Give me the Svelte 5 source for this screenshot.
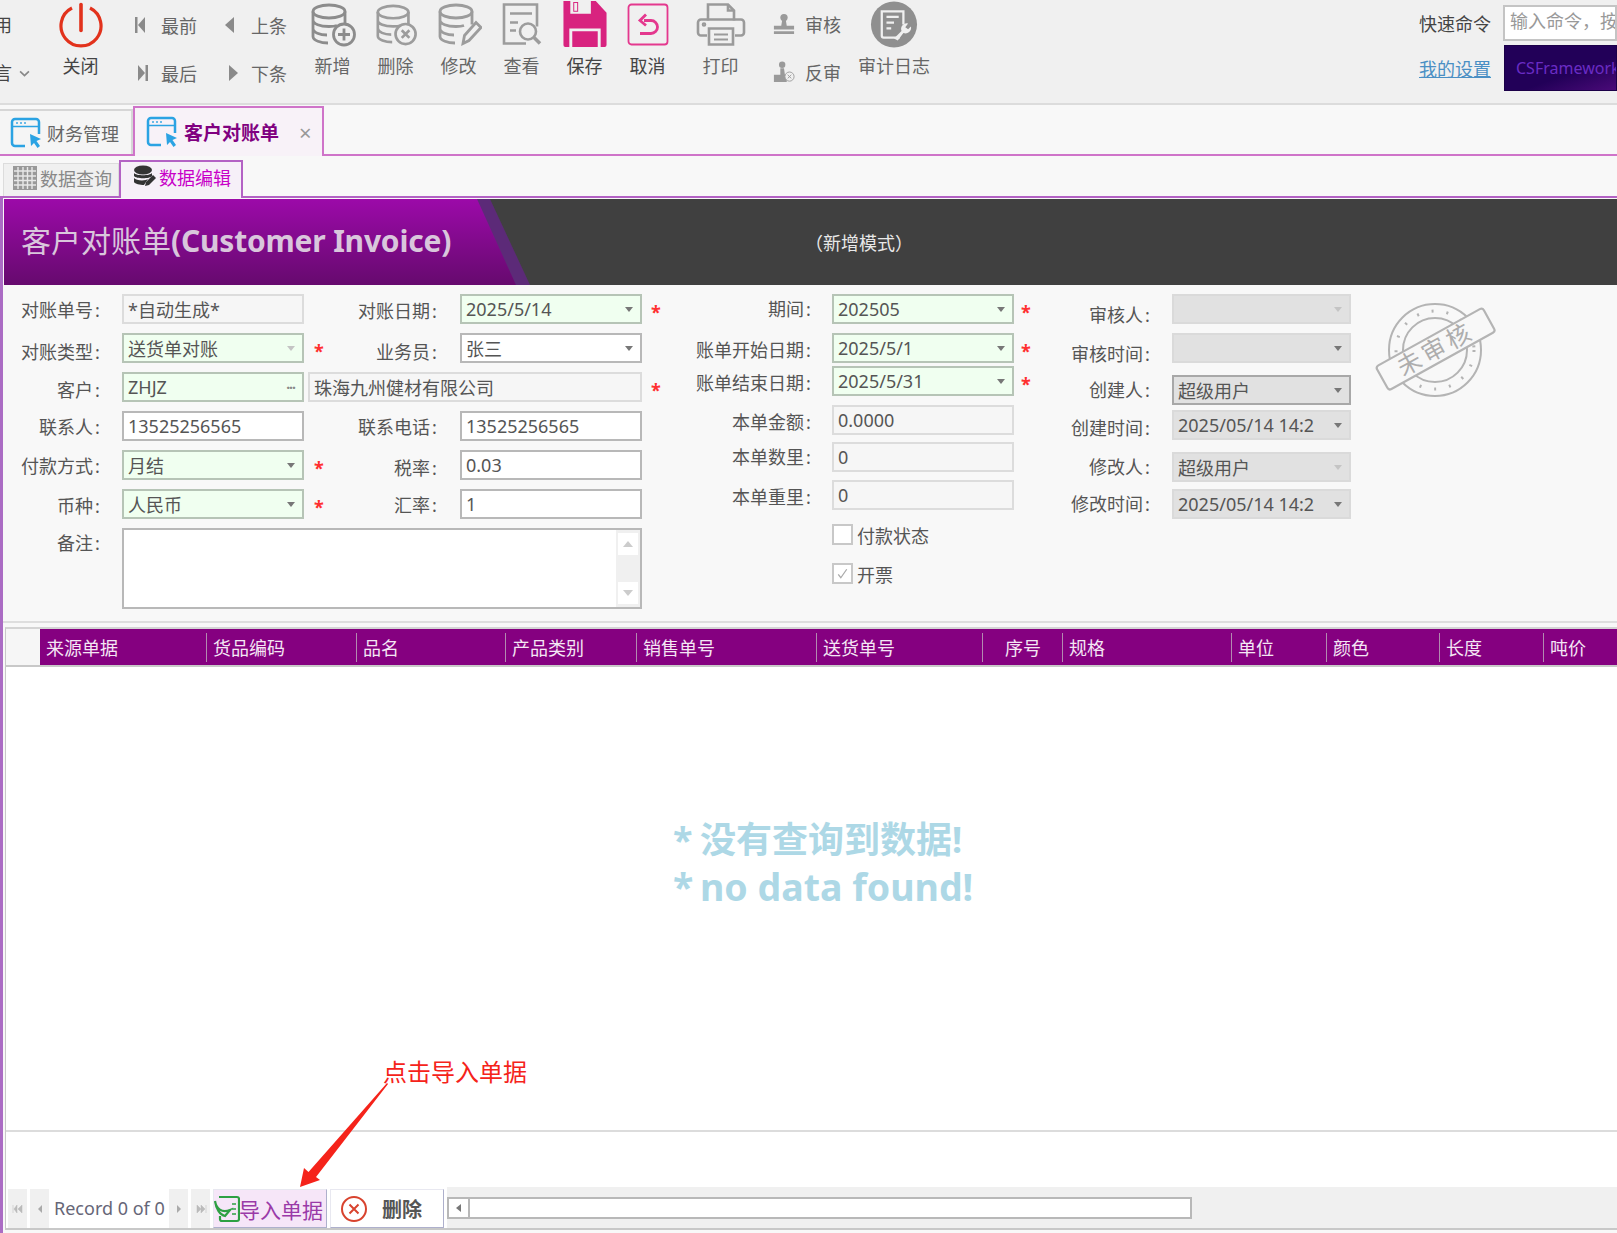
<script>
	const left = [
		{ l1: '对账单号', f1: { v: '*自动生成*', t: 'ro' }, l2: '对账日期', f2: { v: '2025/5/14', t: 'req', arrow: 1 }, star2: 1, d1: 1, d2: 2, mt: 0 },
		{ l1: '对账类型', f1: { v: '送货单对账', t: 'req', arrow: 2 }, star1: 1, l2: '业务员', f2: { v: '张三', t: 'plain', arrow: 1 }, d1: 4, d2: 4, mt: 9 },
		{ l1: '客户', f1: { v: 'ZHJZ', t: 'req', dots: 1 }, name: '珠海九州健材有限公司', star2: 1, d1: 3, mt: 9 },
		{ l1: '联系人', f1: { v: '13525256565', t: 'plain' }, l2: '联系电话', f2: { v: '13525256565', t: 'plain' }, d1: 1, d2: 1, mt: 9 },
		{ l1: '付款方式', f1: { v: '月结', t: 'req', arrow: 1 }, star1: 1, l2: '税率', f2: { v: '0.03', t: 'plain' }, d1: 1, d2: 3, mt: 9 },
		{ l1: '币种', f1: { v: '人民币', t: 'req', arrow: 1 }, star1: 1, l2: '汇率', f2: { v: '1', t: 'plain' }, d1: 2, d2: 1, mt: 9 }
	];
	const col3 = [
		{ l: '期间', v: '202505', t: 'req', arrow: 1, star: 1, d: 0, mt: 0 },
		{ l: '账单开始日期', v: '2025/5/1', t: 'req', arrow: 1, star: 1, d: 2, mt: 9 },
		{ l: '账单结束日期', v: '2025/5/31', t: 'req', arrow: 1, star: 1, d: 2, mt: 3 },
		{ l: '本单金额', v: '0.0000', t: 'ro', d: 2, mt: 9 },
		{ l: '本单数里', v: '0', t: 'ro', d: 0, mt: 7 },
		{ l: '本单重里', v: '0', t: 'ro', d: 2, mt: 8 }
	];
	const col4 = [
		{ l: '审核人', v: '', t: 'off', arrow: 2, d: 6, mt: 0 },
		{ l: '审核时间', v: '', t: 'off', arrow: 1, d: 6, mt: 9 },
		{ l: '创建人', v: '超级用户', t: 'off dark', arrow: 1, d: 0, mt: 12 },
		{ l: '创建时间', v: '2025/05/14 14:2', t: 'off', arrow: 1, d: 3, mt: 5 },
		{ l: '修改人', v: '超级用户', t: 'off', arrow: 2, d: 0, mt: 12 },
		{ l: '修改时间', v: '2025/05/14 14:2', t: 'off', arrow: 1, d: 0, mt: 7 }
	];
	const columns = [
		{ name: '来源单据', w: 167 }, { name: '货品编码', w: 150 }, { name: '品名', w: 149 },
		{ name: '产品类别', w: 131 }, { name: '销售单号', w: 180 }, { name: '送货单号', w: 166 },
		{ name: '序号', w: 80, center: true }, { name: '规格', w: 169 }, { name: '单位', w: 95 },
		{ name: '颜色', w: 113 }, { name: '长度', w: 104 }, { name: '吨价', w: 73 }
	];
</script>

{#snippet field(f)}
	<div class="field {f.t}">
		<span class="val">{f.v}</span>
		{#if f.arrow}<i class="arrow" class:faint={f.arrow === 2}></i>{/if}
		{#if f.dots}<span class="dots">···</span>{/if}
	</div>
{/snippet}

{#snippet db()}
	<ellipse cx="20" cy="10" rx="16" ry="6.5" />
	<path d="M4 10v25c0 4 8 6.5 15 6.5M36 10v13M4 18.500c0 4 7 6.500 16 6.500 3 0 6-.3 8-1M4 27c0 4 7 6.500 14 6.500" />
{/snippet}

{#snippet winIcon()}
	<svg class="win" viewBox="0 0 32 32">
		<path d="M15 29H5a3 3 0 0 1-3-3V5a3 3 0 0 1 3-3h21a3 3 0 0 1 3 3v12" fill="none" stroke="#2ba3e3" stroke-width="2.500" />
		<path d="M3 9.500h25" stroke="#2ba3e3" stroke-width="1.500" />
		<path d="M6 6h2M10 6h2M14 6h2" stroke="#6bbbe8" stroke-width="2" />
		<path d="M20 17l11 5-4.500 2 3.500 5-2.500 2-3.500-5-3 3z" fill="#2ba3e3" />
	</svg>
{/snippet}

<div class="page">
	<header class="toolbar">
		<div class="lang">
			<span class="cut">用</span>
			<span class="cut">言<svg class="chev" viewBox="0 0 10 6"><path d="M1 1l4 4 4-4" fill="none" stroke="#888" stroke-width="1.500" /></svg></span>
		</div>
		<div class="big dark-label">
			<svg width="46" height="46" viewBox="0 0 46 46" fill="none" stroke="#e2321c" stroke-width="3.200"><path d="M14 6.500a20 20 0 1 0 18 0" /><path d="M23 3v26" stroke-linecap="round" stroke-width="3.600" /></svg>
			<span>关闭</span>
		</div>
		<div class="nav-group">
			<div class="nav"><svg viewBox="0 0 12 20"><path d="M1 2h2.500v16H1zM11 2v16L4 10z" fill="#8a8a8a" /></svg><span>最前</span></div>
			<div class="nav"><svg viewBox="0 0 12 20"><path d="M10 2v16L1 10z" fill="#8a8a8a" /></svg><span>上条</span></div>
			<div class="nav low"><svg viewBox="0 0 12 20"><path d="M1 2v16l7-8zM8.500 2H11v16H8.500z" fill="#8a8a8a" /></svg><span>最后</span></div>
			<div class="nav low"><svg viewBox="0 0 12 20"><path d="M2 2v16l9-8z" fill="#8a8a8a" /></svg><span>下条</span></div>
		</div>
		<div class="big">
			<svg width="48" height="46" viewBox="0 0 48 46" fill="none" stroke="#8c8c8c" stroke-width="2.800">{@render db()}<circle cx="35" cy="33" r="10.500" /><path d="M35 27v12M29 33h12" /></svg>
			<span>新增</span>
		</div>
		<div class="big">
			<svg width="44" height="46" viewBox="0 0 46 46" fill="none" stroke="#9c9c9c" stroke-width="2.800">{@render db()}<circle cx="33" cy="33" r="10.500" /><path d="M29 29l8 8M37 29l-8 8" /></svg>
			<span>删除</span>
		</div>
		<div class="big">
			<svg width="46" height="46" viewBox="0 0 46 46" fill="none" stroke="#9c9c9c" stroke-width="2.800">{@render db()}<path d="M27 42l1.500-8L40 21l5 5-12 13z" /></svg>
			<span>修改</span>
		</div>
		<div class="big">
			<svg width="40" height="46" viewBox="0 0 40 46" fill="none" stroke="#9c9c9c" stroke-width="2.600"><path d="M24 42H2V3h33v22" /><path d="M8 12h22M8 21h8M8 29h6" /><circle cx="26" cy="30" r="8" /><path d="M32 36l6 6" stroke-width="3.500" /></svg>
			<span>查看</span>
		</div>
		<div class="big dark-label">
			<svg width="46" height="48" viewBox="0 0 46 48"><path d="M1 0h33l11 12v33a2 2 0 0 1-2 2H3a2 2 0 0 1-2-2z" fill="#d8237f" /><path d="M8 0h21v13H8zM7 28h32v19H7z" fill="#f0f0f0" /><path d="M11 1h5v10h-5zM10 31h26v16H10z" fill="#d8237f" /><path d="M12 2h3v8h-3z" fill="#f0f0f0" /></svg>
			<span>保存</span>
		</div>
		<div class="big dark-label">
			<svg width="42" height="44" viewBox="0 0 42 44" fill="none" stroke="#e4388e"><rect x="1.500" y="2" width="39" height="40" rx="3" stroke-width="1.800" /><path d="M13 31h11a6.500 6.500 0 0 0 0-13h-7" stroke-width="2.800" /><path d="M19 12l-6 6 6 5" stroke-width="2.800" /></svg>
			<span>取消</span>
		</div>
		<div class="big print">
			<svg width="50" height="44" viewBox="0 0 50 44" fill="none" stroke="#9a9a9a" stroke-width="2.600"><path d="M12 18V2h20l6 6v10" /><path d="M32 2v6h6" /><path d="M11 33H5a3 3 0 0 1-3-3V20a3 3 0 0 1 3-3h40a3 3 0 0 1 3 3v10a3 3 0 0 1-3 3h-6" /><path d="M13 26h24v16H13z" /><path d="M18 32h14M18 37h14" stroke-width="2" /><circle cx="8" cy="22" r="1" /></svg>
			<span>打印</span>
		</div>
		<div class="audit-col">
			<div class="nav"><svg class="small" viewBox="0 0 24 24"><circle cx="12" cy="5" r="4" fill="#9a9a9a" /><path d="M10 8h4l1 6h8v4H1v-4h8zM1 20h22v3H1z" fill="#9a9a9a" /></svg><span>审核</span></div>
			<div class="nav low"><svg class="small" viewBox="0 0 24 24"><circle cx="10" cy="4" r="3.500" fill="#9a9a9a" /><path d="M8 8h4l1 7H1v8h14V15H8z" fill="#9a9a9a" /><circle cx="18" cy="17" r="5" fill="#f0f0f0" stroke="#9a9a9a" /><path d="M16 15l4 4M20 15l-4 4" stroke="#9a9a9a" /></svg><span>反审</span></div>
		</div>
		<div class="big audit">
			<svg width="50" height="50" viewBox="0 0 50 50"><circle cx="25" cy="25" r="24.500" fill="#8f8f8f" /><path d="M31 39H14a2 2 0 0 1-2-2V11h23v14" fill="none" stroke="#f0f0f0" stroke-width="2.400" /><path d="M17 17h13M17 23h8M17 29h5" stroke="#f0f0f0" stroke-width="2.400" /><path d="M25 40l8-8a6 6 0 0 1 7-8l-3 4 3 2 3-3a6 6 0 0 1-8 7l-6 8z" fill="#f0f0f0" /></svg>
			<span>审计日志</span>
		</div>
		<div class="quick">
			<span class="q-label">快速命令</span>
			<div class="q-input">输入命令，按回车执行</div>
			<span class="q-link">我的设置</span>
			<div class="brand">CSFramework</div>
		</div>
	</header>

	<nav class="tabs">
		<div class="tab">{@render winIcon()}<span>财务管理</span></div>
		<div class="tab active">{@render winIcon()}<b>客户对账单</b><span class="close">×</span></div>
	</nav>

	<nav class="subtabs">
		<div class="subtab">
			<svg width="24" height="24" viewBox="0 0 24 24"><rect width="24" height="24" fill="#999" /><path d="M1 5h22M1 10h22M1 14.500h22M1 19h22M5 1v22M10 1v22M14.500 1v22M19 1v22" stroke="#e8e8e8" stroke-width="1.400" /></svg>
			<span>数据查询</span>
		</div>
		<div class="subtab active">
			<svg width="24" height="24" viewBox="0 0 24 24"><ellipse cx="11" cy="5" rx="9" ry="4.500" fill="#333" /><path d="M2 8c2 3 16 3 18 0v3c-2 3-16 3-18 0zM2 13c2 3 12 3 14 1l-4 6c-4 0-9-1-10-3z" fill="#333" /><path d="M13 21l1-4 7-7 3 3-7 7z" fill="#333" /></svg>
			<span>数据编辑</span>
		</div>
	</nav>

	<main class="content">
		<div class="banner">
			<div class="stripe">
				<div class="purple">
					<h1><span class="cn">客户对账单</span>(Customer Invoice)</h1>
				</div>
			</div>
			<span class="mode">（新增模式）</span>
		</div>

		<section class="form">
			<div class="left-block">
				{#each left as r}
					<div class="lrow" style="margin-top:{r.mt}px">
						<div class="lab" style="padding-top:{r.d1}px">{r.l1}</div>
						{@render field(r.f1)}
						{#if r.name}
							<div class="field ro name"><span class="val">{r.name}</span></div>
						{:else}
							<div class="mid">
								{#if r.star1}<span class="star">*</span>{/if}
								<div class="lab" style="padding-top:{r.d2}px">{r.l2}</div>
							</div>
							{@render field(r.f2)}
						{/if}
						{#if r.star2}<span class="star end">*</span>{/if}
					</div>
				{/each}
				<div class="lrow memo-row">
					<div class="lab">备注</div>
					<div class="memo">
						<div class="memo-bar">
							<span class="sb"><i class="up"></i></span>
							<span class="sb"><i class="down"></i></span>
						</div>
					</div>
				</div>
			</div>

			<div class="col col3">
				{#each col3 as f}
					<div class="crow" style="margin-top:{f.mt}px">
						<div class="lab" style="padding-top:{f.d}px">{f.l}</div>
						{@render field(f)}
						{#if f.star}<span class="star">*</span>{/if}
					</div>
				{/each}
				<div class="check"><span class="box"></span>付款状态</div>
				<div class="check second">
					<span class="box"><svg viewBox="0 0 20 20"><path d="M5 11l3 4 7-10" fill="none" stroke="#aaa" stroke-width="1.500" /></svg></span>开票
				</div>
			</div>

			<div class="col col4">
				{#each col4 as f}
					<div class="crow" style="margin-top:{f.mt}px">
						<div class="lab" style="padding-top:{f.d}px">{f.l}</div>
						{@render field(f)}
					</div>
				{/each}
			</div>

			<svg class="stamp" width="124" height="100" viewBox="0 0 124 100" fill="none" stroke="#b4b4b4">
				<circle cx="60" cy="50" r="46" stroke-width="2" />
				<circle cx="60" cy="50" r="32" stroke-width="2" />
				<circle cx="60" cy="50" r="39" stroke-width="3" stroke-dasharray="2 13" />
				<g transform="rotate(-29 60 50)">
					<rect x="0" y="36" width="122" height="27" rx="3" fill="#f8f8f8" stroke-width="2.200" />
					<text x="61" y="58" text-anchor="middle" class="stamp-text">未审核</text>
				</g>
			</svg>
		</section>

		<section class="grid">
			<div class="grid-head">
				<div class="corner"></div>
				{#each columns as c}
					<div class="th" class:center={c.center} style="width:{c.w}px">{c.name}</div>
				{/each}
			</div>
			<div class="empty">
				<div class="msg"><span class="ast">*</span>没有查询到数据!</div>
				<div class="msg en"><span class="ast">*</span>no data found!</div>
			</div>
			<div class="summary"></div>
			<div class="pager">
				<span class="pg"><svg viewBox="0 0 12 8"><path d="M1 0v8M5 0v8L2 4zM10 0v8L6 4z" fill="#bbb" stroke="#bbb" stroke-width=".5" /></svg></span>
				<span class="pg"><svg viewBox="0 0 12 8"><path d="M8 0v8L4 4z" fill="#aaa" /></svg></span>
				<span class="record">Record 0 of 0</span>
				<span class="pg"><svg viewBox="0 0 12 8"><path d="M4 0v8l4-4z" fill="#aaa" /></svg></span>
				<span class="pg"><svg viewBox="0 0 12 8"><path d="M2 0v8l4-4zM6 0v8l4-4zM11 0v8" fill="#bbb" stroke="#bbb" stroke-width=".5" /></svg></span>
				<div class="btn import">
					<svg width="26" height="28" viewBox="0 0 26 28" fill="none" stroke="#2ea043" stroke-width="2.200"><path d="M5 2h18a2 2 0 0 1 2 2v20a2 2 0 0 1-2 2H8a2 2 0 0 1-2-2v-3" /><path d="M18 9h4M18 14h4M18 19h4" stroke-width="1.600" /><path d="M1 6c1 8 7 12 15 9l-5 6C6 20 2 14 1 6z" fill="#f6e6f8" /></svg>
					<span>导入单据</span>
				</div>
				<div class="btn del">
					<svg width="28" height="28" viewBox="0 0 28 28" fill="none" stroke="#d8432e" stroke-width="2"><circle cx="14" cy="14" r="12" /><path d="M9.500 9.500l9 9M18.500 9.500l-9 9" /></svg>
					<span>删除</span>
				</div>
				<div class="hscroll">
					<span class="hs-btn"><i></i></span>
					<div class="hs-thumb"></div>
				</div>
			</div>
		</section>
	</main>

	<div class="note">点击导入单据</div>
	<svg class="note-arrow" width="1617" height="1233" viewBox="0 0 1617 1233">
		<path d="M387 1083L388 1084L316 1177L320 1180L300 1187L304 1168L308.500 1172Z" fill="#f5231a" />
	</svg>
</div>

<style>
	:global(body) {
		margin: 0;
		background: #f8f8f8;
	}

	.page {
		position: relative;
		width: 1617px;
		height: 1233px;
		overflow: hidden;
		display: flex;
		flex-direction: column;
		font-family: "Noto Sans", "Noto Sans CJK SC", sans-serif;
		font-size: 18px;
		color: #666;
		background: #f8f8f8;
	}

	/* toolbar */
	.toolbar {
		display: flex;
		height: 103px;
		flex: none;
		background: #f0f0f0;
		border-bottom: 2px solid #dcdcdc;
	}

	.lang {
		width: 49px;
		display: flex;
		flex-direction: column;
		color: #444;
		line-height: 26px;
		margin-left: -6px;
		margin-right: 6px;
		padding-top: 12px;
		gap: 22px;
	}

	.cut {
		display: flex;
		align-items: center;
	}

	.chev {
		width: 11px;
		height: 7px;
		margin-left: 7px;
	}

	.big {
		width: 63px;
		flex: none;
		display: flex;
		flex-direction: column;
		align-items: center;
		line-height: 26px;
		height: 79px;
		justify-content: space-between;
	}

	.big span {
		white-space: nowrap;
	}

	.big svg {
		height: 47px;
		margin-top: 1px;
	}

	.dark-label {
		color: #444;
	}

	.print {
		margin-left: 10px;
	}

	.audit {
		width: 72px;
		margin-left: 7px;
	}

	.nav-group {
		width: 190px;
		flex: none;
		display: grid;
		grid-template-columns: 90px 100px;
		grid-auto-rows: 48px;
		padding: 1px 0 0 22px;
		box-sizing: border-box;
		margin-right: -1px;
	}

	.nav {
		display: flex;
		align-items: center;
		gap: 15px;
		height: 48px;
		white-space: nowrap;
	}

	.nav svg {
		width: 12px;
		height: 20px;
		flex: none;
	}

	.nav-group .low {
		padding-left: 3px;
		gap: 12px;
	}

	.audit-col {
		width: 99px;
		flex: none;
		padding-left: 21px;
		box-sizing: border-box;
	}

	.nav svg.small {
		width: 22px;
		height: 24px;
	}

	.nav .small {
		margin-right: -5px;
	}

	.quick {
		margin-left: auto;
		width: 198px;
		flex: none;
		display: grid;
		grid-template-columns: 71px 114px;
		column-gap: 13px;
		padding-top: 5px;
		grid-template-rows: 36px 46px;
		row-gap: 4px;
		align-items: center;
	}

	.q-label {
		color: #444;
		white-space: nowrap;
	}

	.q-link {
		color: #4a8fc4;
		text-decoration: underline;
		white-space: nowrap;
	}

	.q-input {
		height: 36px;
		box-sizing: border-box;
		background: #fff;
		border: 2px solid #c4c4c4;
		color: #999;
		padding-left: 5px;
		line-height: 28px;
		white-space: nowrap;
		overflow: hidden;
	}

	.brand {
		height: 46px;
		background: linear-gradient(160deg, #220058 60%, #4a0a78 100%);
		color: #6a2cc4;
		font-size: 16px;
		line-height: 44px;
		padding-left: 11px;
		margin-left: 1px;
		white-space: nowrap;
		overflow: hidden;
		border: 1px solid #1b0048;
		box-sizing: border-box;
	}

	/* tabs */
	.tabs {
		height: 51px;
		flex: none;
		box-sizing: border-box;
		display: flex;
		align-items: flex-end;
		border-bottom: 2px solid #cf74c9;
		background: #f8f8f8;
	}

	.tab {
		width: 133px;
		height: 45px;
		box-sizing: border-box;
		display: flex;
		align-items: center;
		gap: 5px;
		padding-left: 10px;
		background: #f5f5f5;
		border: 2px solid #d6d6d6;
		border-bottom: none;
		border-left: none;
	}

	.tab.active {
		width: 191px;
		height: 50px;
		margin-bottom: -2px;
		padding-left: 11px;
		background: #f8f2f8;
		border: 2px solid #cf74c9;
		border-bottom: none;
		gap: 6px;
	}

	.tab b {
		color: #800080;
		font-weight: 700;
		font-size: 19px;
	}

	.close {
		color: #999;
		font-size: 22px;
		margin-left: 14px;
	}

	.win {
		width: 32px;
		height: 32px;
		flex: none;
	}

	.subtabs {
		height: 42px;
		flex: none;
		box-sizing: border-box;
		display: flex;
		align-items: flex-end;
		padding-left: 3px;
		border-bottom: 2px solid #b362c4;
	}

	.subtab {
		width: 116px;
		height: 33px;
		box-sizing: border-box;
		display: flex;
		align-items: center;
		gap: 3px;
		padding: 0 0 4px 9px;
		background: #f0f0f0;
		border: 1px solid #dcdcdc;
		border-bottom: none;
		color: #888;
	}

	.subtab.active {
		width: 124px;
		height: 38px;
		margin-bottom: -2px;
		padding: 0 0 6px 11px;
		background: #f6f0f8;
		border: 2px solid #b362c4;
		border-bottom: none;
		color: #c800c8;
	}

	/* main */
	.content {
		flex: 1;
		min-height: 0;
		display: flex;
		flex-direction: column;
		border-left: 3px solid #ab6cc4;
		padding-top: 1px;
	}

	.banner {
		height: 86px;
		flex: none;
		margin-left: 1px;
		background: #404040;
		display: flex;
		align-items: center;
	}

	.stripe {
		width: 526px;
		height: 100%;
		flex: none;
		background: #5c2a78;
		clip-path: polygon(0 0, 486px 0, 100% 100%, 0 100%);
	}

	.purple {
		height: 100%;
		display: flex;
		align-items: center;
		background: linear-gradient(#9c0aa9, #660a6e);
		clip-path: polygon(0 0, 473px 0, 512px 100%, 0 100%);
		padding-left: 17px;
	}

	h1 {
		margin: 0 0 6px;
		font-size: 30px;
		font-weight: 700;
		color: #d9c6dc;
		white-space: nowrap;
		letter-spacing: -.2px;
	}

	.cn {
		font-weight: 400;
		letter-spacing: 0;
	}

	.mode {
		margin-left: 275px;
		color: #e8e8e8;
		white-space: nowrap;
	}

	.form {
		height: 338px;
		flex: none;
		box-sizing: border-box;
		border-bottom: 2px solid #dedede;
		padding-top: 9px;
		display: flex;
		align-items: flex-start;
	}

	.left-block {
		width: 700px;
		flex: none;
	}

	.lrow {
		display: grid;
		grid-template-columns: 99px 202px 156px 182px 30px;
		align-items: start;
		height: 30px;
	}

	.lab {
		line-height: 30px;
		text-align: right;
		white-space: nowrap;
		color: #555;
	}

	.lab::after {
		content: ':';
		display: inline-block;
		width: 9px;
		text-align: center;
	}

	.lrow .field:nth-child(2) {
		margin-left: 20px;
	}

	.mid {
		display: flex;
		height: 30px;
		padding-left: 10px;
		margin-right: 21px;
	}

	.mid .lab {
		margin-left: auto;
	}

	.field {
		height: 30px;
		box-sizing: border-box;
		display: flex;
		align-items: center;
		padding: 0 6px 0 4px;
		border: 2px solid #b8b8b8;
		background: #fff;
		color: #555;
		white-space: nowrap;
		overflow: hidden;
	}

	.field .val {
		flex: 1;
		overflow: hidden;
	}

	.field.req {
		background: #f0fff0;
		border-color: #b6c4b6;
	}

	.field.ro {
		background: #f6f6f6;
		border-color: #dcdcdc;
	}

	.field.off {
		background: #e1e1e1;
		border-color: #dadada;
	}

	.field.off.dark {
		border-color: #a8a8a8;
	}

	.name {
		grid-column: 3 / span 2;
		margin-left: 4px;
	}

	.arrow {
		width: 0;
		height: 0;
		border: 4.500px solid transparent;
		border-top: 5px solid #777;
		border-bottom: none;
		flex: none;
		margin-right: 1px;
	}

	.arrow.faint {
		border-top-color: #c4c4c4;
	}

	.dots {
		color: #888;
		font-size: 14px;
		font-weight: 700;
		letter-spacing: -1px;
		margin-right: 1px;
	}

	.star {
		color: #ff3030;
		font-size: 18px;
		font-weight: 700;
		line-height: 36px;
		height: 30px;
		white-space: nowrap;
	}

	.star.end {
		margin-left: 9px;
		grid-column: 5;
	}

	.memo-row {
		height: 81px;
		margin-top: 9px;
	}

	.memo {
		grid-column: 2 / span 3;
		margin-left: 20px;
		height: 81px;
		box-sizing: border-box;
		border: 2px solid #b8b8b8;
		background: #fff;
		display: flex;
		justify-content: flex-end;
	}

	.memo-bar {
		width: 24px;
		background: #f0f0f0;
		display: flex;
		flex-direction: column;
		justify-content: space-between;
		padding: 3px 2px;
		box-sizing: border-box;
	}

	.sb {
		height: 22px;
		background: #fff;
		display: flex;
		align-items: center;
		justify-content: center;
	}

	.up,
	.down {
		width: 0;
		height: 0;
		border: 5px solid transparent;
	}

	.up {
		border-bottom: 6px solid #ccc;
		border-top: none;
	}

	.down {
		border-top: 6px solid #ccc;
		border-bottom: none;
	}

	.col {
		flex: none;
		display: flex;
		flex-direction: column;
	}

	.col3 {
		width: 346px;
		margin-left: -17px;
	}

	.col4 {
		width: 319px;
	}

	.crow {
		display: grid;
		align-items: start;
		height: 30px;
	}

	.col3 .crow {
		grid-template-columns: 127px 201px 18px;
	}

	.col3 .crow .field {
		margin-left: 19px;
	}

	.col3 .star {
		margin-left: 7px;
	}

	.col4 .crow {
		grid-template-columns: 120px 199px;
	}

	.col4 .crow .field {
		margin-left: 20px;
	}

	.check {
		display: flex;
		align-items: center;
		gap: 4px;
		margin: 14px 0 0 146px;
		height: 21px;
		color: #555;
		white-space: nowrap;
	}

	.check.second {
		margin-top: 18px;
	}

	.box {
		width: 21px;
		height: 21px;
		box-sizing: border-box;
		border: 2px solid #c8c8c8;
		background: #fff;
		display: block;
	}

	.box svg {
		display: block;
		width: 17px;
		height: 17px;
	}

	.stamp {
		flex: none;
		margin: 6px 0 0 24px;
	}

	.stamp-text {
		font-size: 24px;
		fill: #adadad;
		stroke: none;
		letter-spacing: 4px;
	}

	/* grid */
	.grid {
		flex: 1;
		min-height: 0;
		display: flex;
		flex-direction: column;
		margin: 4px 0 3px 2px;
		border-left: 1px solid #c8c8c8;
		border-top: 2px solid #d4d4d4;
		border-bottom: 2px solid #c8c8c8;
		background: #fff;
	}

	.grid-head {
		height: 38px;
		box-sizing: border-box;
		flex: none;
		display: flex;
		background: #850080;
		border-bottom: 2px solid #c8c8c8;
	}

	.corner {
		width: 34px;
		flex: none;
		background: #f6f6f6;
	}

	.th {
		flex: none;
		box-sizing: border-box;
		padding-left: 6px;
		color: #f4e6f4;
		line-height: 38px;
		white-space: nowrap;
		position: relative;
	}

	.th.center {
		text-align: center;
		padding-left: 0;
	}

	.th:not(:last-child)::after {
		content: '';
		position: absolute;
		right: 0;
		top: 4px;
		bottom: 3px;
		width: 1px;
		background: #b28ab0;
	}

	.empty {
		height: 465px;
		flex: none;
		box-sizing: border-box;
		border-bottom: 2px solid #dcdcdc;
		padding: 149px 0 0 667px;
		color: #add8e6;
		font-weight: 700;
		font-size: 36px;
		line-height: 47px;
		white-space: nowrap;
	}

	.msg {
		display: flex;
	}

	.msg.en {
		font-size: 37.500px;
	}

	.ast {
		width: 27px;
		flex: none;
	}

	.summary {
		flex: 1;
		min-height: 0;
	}

	.pager {
		height: 39px;
		flex: none;
		display: flex;
		align-items: stretch;
		padding-left: 2px;
		background: #fff;
	}

	.pg {
		width: 19px;
		flex: none;
		background: #f0f0f0;
		display: flex;
		align-items: center;
		justify-content: center;
		margin-right: 3px;
	}

	.pg svg {
		width: 12px;
		height: 8px;
	}

	.record {
		width: 115px;
		flex: none;
		margin-left: 2px;
		line-height: 39px;
		color: #667;
		white-space: nowrap;
	}

	.btn {
		flex: none;
		width: 114px;
		box-sizing: border-box;
		display: flex;
		align-items: center;
		border: 1px solid #e8e8f0;
		border-right-color: #aeb0cc;
		border-bottom-color: #aeb0cc;
		margin-right: 3px;
		white-space: nowrap;
	}

	.import {
		background: #f6e6f8;
		color: #9a3aa8;
		font-size: 21px;
	}

	.import span {
		margin-left: -1px;
	}

	.del {
		background: #fff;
		color: #555;
		font-size: 20px;
		padding-left: 9px;
		gap: 14px;
		font-weight: 700;
	}

	.hscroll {
		flex: 1;
		display: flex;
		align-items: center;
		background: #f0f0f0;
		margin-top: -2px;
	}

	.hs-btn {
		width: 23px;
		height: 22px;
		box-sizing: border-box;
		background: #fff;
		border: 2px solid #b8b8b8;
		display: flex;
		align-items: center;
		justify-content: center;
		flex: none;
	}

	.hs-btn i {
		width: 0;
		height: 0;
		border: 4px solid transparent;
		border-right: 5px solid #777;
		border-left: none;
	}

	.hs-thumb {
		width: 722px;
		height: 22px;
		box-sizing: border-box;
		background: #fff;
		border: 2px solid #b8b8b8;
		border-left: none;
	}

	/* annotation over the screen */
	.note {
		position: absolute;
		left: 383px;
		top: 1055px;
		font-size: 24px;
		line-height: 34px;
		color: #f5231a;
		white-space: nowrap;
	}

	.note-arrow {
		position: absolute;
		left: 0;
		top: 0;
		pointer-events: none;
	}
</style>
